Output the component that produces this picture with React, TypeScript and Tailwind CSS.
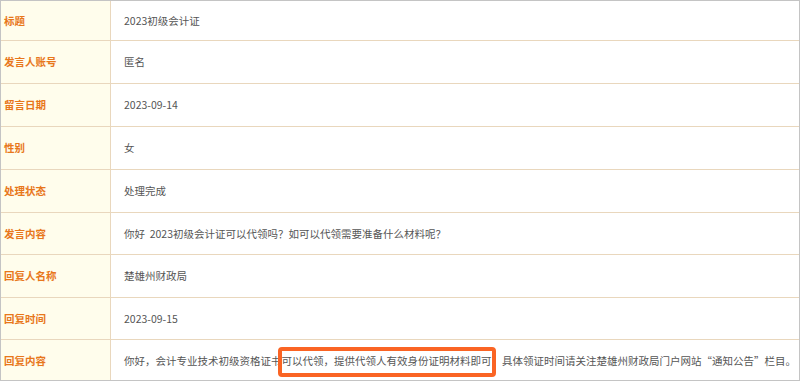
import React from 'react';

const rows: { label: string; value: string; h: string }[] = [
    { label: '标题', value: '2023初级会计证', h: 'h-[40px]' },
    { label: '发言人账号', value: '匿名', h: 'h-[43px]' },
    { label: '留言日期', value: '2023-09-14', h: 'h-[43px]' },
    { label: '性别', value: '女', h: 'h-[43px]' },
    { label: '处理状态', value: '处理完成', h: 'h-[43px]' },
    { label: '发言内容', value: '你好  2023初级会计证可以代领吗？如可以代领需要准备什么材料呢？', h: 'h-[42px]' },
    { label: '回复人名称', value: '楚雄州财政局', h: 'h-[43px]' },
    { label: '回复时间', value: '2023-09-15', h: 'h-[42px]' },
    {
        label: '回复内容',
        value: '你好，会计专业技术初级资格证书可以代领，提供代领人有效身份证明材料即可，具体领证时间请关注楚雄州财政局门户网站“通知公告”栏目。',
        h: 'h-[41px]',
    },
];

export default function App() {
    return (
        <div className="relative w-[800px] h-[381px] overflow-hidden bg-white border border-[#c4c4c4] font-['Noto_Sans_CJK_SC','Microsoft_YaHei',sans-serif] text-[10.5px]">
            {rows.map((row, i) => (
                <div
                    key={row.label}
                    className={`flex ${row.h} ${i < rows.length - 1 ? 'border-b border-[#e9d7bd]' : ''}`}
                >
                    <div className="w-[110px] shrink-0 flex items-center pl-[3px] bg-[#fffdec] border-r border-[#e9d7bd] font-bold text-[#e8771b]">
                        {row.label}
                    </div>
                    <div className="flex-1 flex items-center pl-[13px] text-[#555555] whitespace-pre overflow-hidden">
                        {row.value}
                    </div>
                </div>
            ))}

            {/* annotation box */}
            <div className="absolute left-[277px] top-[346px] w-[218px] h-[30px] border-4 border-[#fa6424] rounded-[4px]" />
        </div>
    );
}
